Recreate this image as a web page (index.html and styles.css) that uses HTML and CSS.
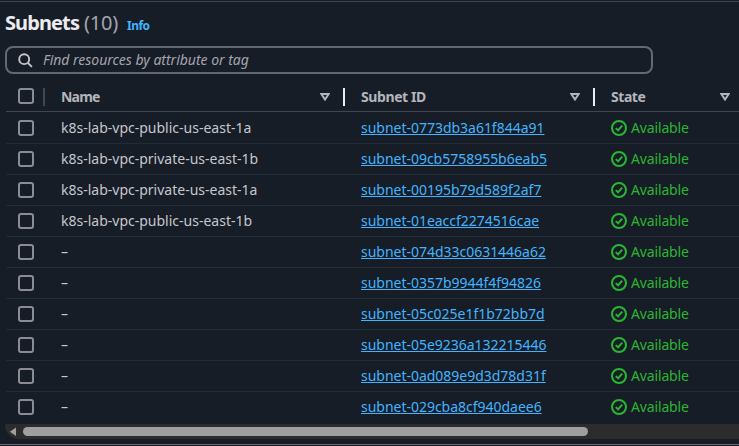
FILE: index.html
```
<!DOCTYPE html>
<html lang="en">
<head>
<meta charset="utf-8">
<title>Subnets</title>
<link rel="stylesheet" href="styles.css">
</head>
<body>
<svg class="defs" aria-hidden="true">
  <symbol id="check" viewBox="0 0 16 16"><circle cx="8" cy="8" r="7"/><path d="m4.8 8.1 2.3 2.3 4.1-4.8"/></symbol>
  <symbol id="filter" viewBox="0 0 10 8"><path d="M1.3 1h7.4L5 6.5z"/></symbol>
</svg>
<main class="panel">
  <header class="title"><h1>Subnets</h1><span class="count">(10)</span><a class="info">Info</a></header>
  <div class="search">
    <svg class="search-icon" viewBox="0 0 16 16"><circle cx="6.6" cy="6.6" r="5.3"/><path d="m10.5 10.5 4.3 4.3"/></svg>
    <span class="placeholder">Find resources by attribute or tag</span>
  </div>
  <section class="table">
    <div class="row head">
      <div class="select"><i class="box"></i></div>
      <div class="cell"><b class="h-name">Name</b><svg class="sort"><use href="#filter"/></svg></div>
      <div class="cell"><b class="h-id">Subnet ID</b><svg class="sort"><use href="#filter"/></svg></div>
      <div class="cell"><b class="h-state">State</b><svg class="sort"><use href="#filter"/></svg></div>
    </div>
    <div class="row"><div class="select"><i class="box"></i></div><div class="cell name">k8s-lab-vpc-public-us-east-1a</div><div class="cell"><a class="id">subnet-0773db3a61f844a91</a></div><div class="cell state"><svg><use href="#check"/></svg><span>Available</span></div></div>
    <div class="row"><div class="select"><i class="box"></i></div><div class="cell name">k8s-lab-vpc-private-us-east-1b</div><div class="cell"><a class="id">subnet-09cb5758955b6eab5</a></div><div class="cell state"><svg><use href="#check"/></svg><span>Available</span></div></div>
    <div class="row"><div class="select"><i class="box"></i></div><div class="cell name">k8s-lab-vpc-private-us-east-1a</div><div class="cell"><a class="id">subnet-00195b79d589f2af7</a></div><div class="cell state"><svg><use href="#check"/></svg><span>Available</span></div></div>
    <div class="row"><div class="select"><i class="box"></i></div><div class="cell name">k8s-lab-vpc-public-us-east-1b</div><div class="cell"><a class="id">subnet-01eaccf2274516cae</a></div><div class="cell state"><svg><use href="#check"/></svg><span>Available</span></div></div>
    <div class="row"><div class="select"><i class="box"></i></div><div class="cell name">–</div><div class="cell"><a class="id">subnet-074d33c0631446a62</a></div><div class="cell state"><svg><use href="#check"/></svg><span>Available</span></div></div>
    <div class="row"><div class="select"><i class="box"></i></div><div class="cell name">–</div><div class="cell"><a class="id">subnet-0357b9944f4f94826</a></div><div class="cell state"><svg><use href="#check"/></svg><span>Available</span></div></div>
    <div class="row"><div class="select"><i class="box"></i></div><div class="cell name">–</div><div class="cell"><a class="id">subnet-05c025e1f1b72bb7d</a></div><div class="cell state"><svg><use href="#check"/></svg><span>Available</span></div></div>
    <div class="row"><div class="select"><i class="box"></i></div><div class="cell name">–</div><div class="cell"><a class="id">subnet-05e9236a132215446</a></div><div class="cell state"><svg><use href="#check"/></svg><span>Available</span></div></div>
    <div class="row"><div class="select"><i class="box"></i></div><div class="cell name">–</div><div class="cell"><a class="id">subnet-0ad089e9d3d78d31f</a></div><div class="cell state"><svg><use href="#check"/></svg><span>Available</span></div></div>
    <div class="row"><div class="select"><i class="box"></i></div><div class="cell name">–</div><div class="cell"><a class="id">subnet-029cba8cf940daee6</a></div><div class="cell state"><svg><use href="#check"/></svg><span>Available</span></div></div>
  </section>
  <div class="scrollbar"><svg class="arrow" viewBox="0 0 8 10"><path d="M7 .5v8.6L.8 4.8z"/></svg><div class="thumb"></div></div>
</main>
</body>
</html>
```
FILE: styles.css
```
* { box-sizing: border-box; }
body { margin: 0; height: 446px; padding-top: 1px; overflow: hidden; background: #161d26; color: #c6c6cd; font: 14px/20px "Noto Sans", sans-serif; }
.defs { position: absolute; width: 0; height: 0; }
.panel { height: 444px; border-top: 1px solid #424650; border-bottom: 1px solid #656871; padding-left: 5px; }
.title { display: flex; align-items: baseline; height: 44px; padding-top: 9px; white-space: nowrap; line-height: 24px; }
h1 { margin: 0; width: 79px; font-size: 20px; line-height: 24px; color: #ebebf0; letter-spacing: -0.9px; }
.count { width: 43px; font-size: 20px; color: #a4a4ad; letter-spacing: -0.2px; }
.info { font-size: 12px; font-weight: 700; color: #42b4ff; letter-spacing: -0.5px; }
.search { display: flex; align-items: center; gap: 10px; width: 648px; height: 28px; border: 2px solid #656871; border-radius: 8px; padding-left: 11px; color: #a4a4ad; font-style: italic; }
.search-icon { width: 15px; height: 15px; fill: none; stroke: #c6c6cd; stroke-width: 2; }
.placeholder { letter-spacing: -0.02px; }
.table { margin: 7px 0 0 1px; }
.row { display: grid; grid-template-columns: 39px 300px 250px 144px; height: 31px; align-items: center; border-bottom: 1px solid #232b37; }
.row:last-child { height: 30px; border-bottom: 0; }
.head { border-bottom-color: #424650; color: #b4b4bb; height: 31px; margin-bottom: 1px; padding-top: 2px; }
.select { display: flex; align-items: center; height: 18px; padding-left: 12px; }
.head .select { border-right: 2px solid #424650; }
.box { width: 16px; height: 16px; border: 2px solid #8c8c94; border-radius: 3px; }
.head .box { margin-top: -2px; }
.cell { display: flex; align-items: center; height: 18px; padding-left: 16px; white-space: nowrap; }
.head .cell { justify-content: space-between; padding-right: 13px; border-right: 2px solid #ebebf0; }
.head .cell:last-child { padding-right: 9px; border: 0; }
.h-name { letter-spacing: -0.8px; }
.h-id { letter-spacing: -0.4px; }
.h-state { letter-spacing: -0.45px; }
.sort { width: 10px; height: 8px; fill: none; stroke: #b4b4bb; stroke-width: 2; }
.id { color: #42b4ff; letter-spacing: -0.02px; text-decoration: underline; text-underline-offset: 1px; text-decoration-thickness: 1px; }
.state { gap: 4px; color: #2bb534; letter-spacing: -0.15px; }
.state svg { width: 16px; height: 16px; fill: none; stroke: #2bb534; stroke-width: 2; }
.scrollbar { display: flex; align-items: center; height: 15px; margin-top: 2px; padding-left: 4px; gap: 6px; background: #2c2c2c; border-bottom-left-radius: 14px; }
.arrow { width: 8px; height: 10px; fill: #9f9f9f; }
.thumb { width: 565px; height: 9px; border-radius: 5px; background: #9f9f9f; }
```
